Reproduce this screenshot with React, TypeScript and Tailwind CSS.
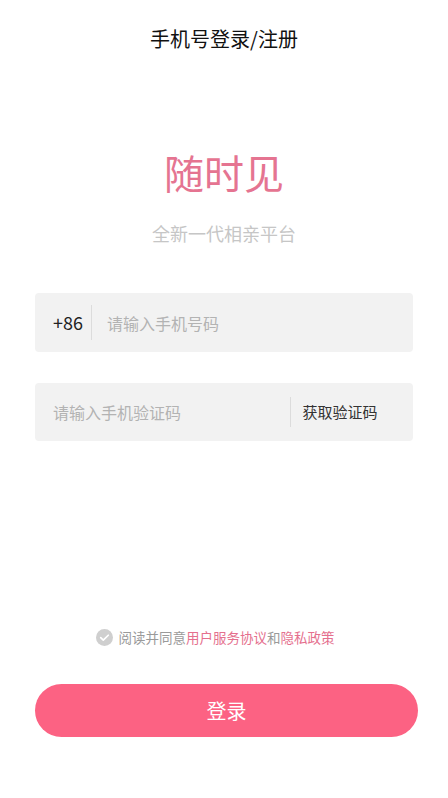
import React from "react"

const font = { fontFamily: '"Noto Sans CJK SC", "Noto Sans", sans-serif' }

function CheckCircle() {
  return (
    <svg viewBox="0 0 18 18" className="h-[17px] w-[17px]">
      <circle cx="9" cy="9" r="9" fill="#cfcfcf" />
      <path d="M5 9.2l2.7 2.6L13 6.6" fill="none" stroke="#fff" strokeWidth="1.8" strokeLinecap="round" strokeLinejoin="round" />
    </svg>
  )
}

export default function App() {
  return (
    <div className="flex min-h-[798px] w-full flex-col bg-white" style={font}>
      <h1 className="mt-[27px] text-center text-[20px] leading-[24px] font-normal text-[#111]">手机号登录/注册</h1>

      <div className="mt-[97px] text-center text-[40px] leading-[48px] text-[#e57491]">随时见</div>
      <div className="mt-[25px] text-center text-[18px] leading-[24px] text-[#c6c6c6]">全新一代相亲平台</div>

      <div className="mx-[35px] mt-[48px] flex h-[59px] items-center rounded-[4px] bg-[#f2f2f2]">
        <span className="pl-[18px] text-[18px] text-[#222]">+86</span>
        <span className="ml-[8px] h-[35px] w-px bg-[#dcdcdc]" />
        <input
          className="ml-[15px] flex-1 bg-transparent text-[16px] outline-none placeholder:text-[#b3b3b3]"
          placeholder="请输入手机号码"
        />
      </div>

      <div className="mx-[35px] mt-[31px] flex h-[58px] items-center rounded-[4px] bg-[#f2f2f2]">
        <input
          className="ml-[18px] w-0 flex-1 bg-transparent text-[16px] outline-none placeholder:text-[#b3b3b3]"
          placeholder="请输入手机验证码"
        />
        <span className="h-[30px] w-px bg-[#dcdcdc]" />
        <button className="w-[122px] pr-[24px] text-center text-[15px] text-[#333]">获取验证码</button>
      </div>

      <div className="mt-[186px] flex items-center justify-center gap-[6px] pr-[18px] text-[13.5px] leading-[20px]">
        <CheckCircle />
        <span className="text-[#9a9a9a]">
          阅读并同意<span className="text-[#e5708e]">用户服务协议</span>和<span className="text-[#e5708e]">隐私政策</span>
        </span>
      </div>

      <button className="mt-[37px] ml-[35px] mr-[30px] h-[53px] rounded-full bg-[#fc6283] text-[20px] text-white">登录</button>
    </div>
  )
}
